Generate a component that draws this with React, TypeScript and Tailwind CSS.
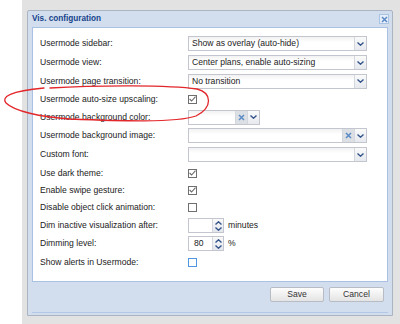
import React from 'react'

// Vis. configuration dialog (ExtJS-like, small Tahoma-ish text)

const font = { fontFamily: '"Liberation Sans", Arial, sans-serif' }

const Chevron: React.FC<{ up?: boolean }> = ({ up }) => (
  <svg width="7" height="4" viewBox="0 0 7 4" className={up ? 'rotate-180' : ''}>
    <path d="M0.5 0.5 L3.5 3.2 L6.5 0.5" fill="none" stroke="#34558b" strokeWidth="1.4" />
  </svg>
)

const Cross: React.FC = () => (
  <svg width="7" height="7" viewBox="0 0 7 7">
    <path d="M1 1 L6 6 M6 1 L1 6" stroke="#5b8bc6" strokeWidth="1.5" />
  </svg>
)

const Trigger: React.FC = () => (
  <div className="flex w-[12px] items-center justify-center border-l border-[#d4d7de] bg-gradient-to-b from-[#fafafa] to-[#e6e9ee]">
    <Chevron />
  </div>
)

const Clear: React.FC = () => (
  <div className="flex w-[12px] items-center justify-center border-l border-[#d4d7de] bg-[#dcdfe4]">
    <Cross />
  </div>
)

const Select: React.FC<{ value?: string; width: string; clear?: boolean }> = ({ value, width, clear }) => (
  <div className={`flex h-[15px] border border-[#c3c6cf] bg-white ${width}`}>
    <div className="flex flex-1 items-center bg-gradient-to-b from-[#f2f2f2] to-white to-40% pl-[3px] text-[8.6px] text-[#222]">
      {value}
    </div>
    {clear && <Clear />}
    <Trigger />
  </div>
)

const Check: React.FC<{ checked?: boolean; focus?: boolean }> = ({ checked, focus }) => (
  <div
    className={`flex h-[9px] w-[9px] items-center justify-center border bg-white ${
      focus ? 'border-[#4f97e0]' : 'border-[#6f6f6f]'
    }`}
  >
    {checked && (
      <svg width="7" height="6" viewBox="0 0 7 6">
        <path d="M0.6 3 L2.6 5 L6.5 0.6" fill="none" stroke="#6a6a6a" strokeWidth="1.1" />
      </svg>
    )}
  </div>
)

const Spinner: React.FC<{ value?: string; unit: string }> = ({ value, unit }) => (
  <div className="flex items-center gap-[4px]">
    <div className="flex h-[15px] w-[36px] border border-[#c3c6cf] bg-white">
      <div className="flex flex-1 items-center pl-[5px] text-[8.6px] text-[#222]">{value}</div>
      <div className="flex w-[11px] flex-col items-center justify-center gap-[2px] border-l border-[#d4d7de] bg-gradient-to-b from-[#fafafa] to-[#e3e7ed]">
        <Chevron up />
        <Chevron />
      </div>
    </div>
    <span className="text-[8.6px] text-[#222]">{unit}</span>
  </div>
)

type Row = { label: string; h: string; control: React.ReactNode }

const rows: Row[] = [
  { label: 'Usermode sidebar:', h: 'h-[19px]', control: <Select value="Show as overlay (auto-hide)" width="w-[179px]" /> },
  { label: 'Usermode view:', h: 'h-[19px]', control: <Select value="Center plans, enable auto-sizing" width="w-[179px]" /> },
  { label: 'Usermode page transition:', h: 'h-[18.5px]', control: <Select value="No transition" width="w-[179px]" /> },
  { label: 'Usermode auto-size upscaling:', h: 'h-[17.5px]', control: <Check checked /> },
  { label: 'Usermode background color:', h: 'h-[18.25px]', control: <Select width="w-[72px]" clear /> },
  { label: 'Usermode background image:', h: 'h-[19.25px]', control: <Select width="w-[179px]" clear /> },
  { label: 'Custom font:', h: 'h-[18.75px]', control: <Select width="w-[179px]" /> },
  { label: 'Use dark theme:', h: 'h-[17.5px]', control: <Check checked /> },
  { label: 'Enable swipe gesture:', h: 'h-[17.25px]', control: <Check checked /> },
  { label: 'Disable object click animation:', h: 'h-[17.75px]', control: <Check /> },
  { label: 'Dim inactive visualization after:', h: 'h-[17.75px]', control: <Spinner unit="minutes" /> },
  { label: 'Dimming level:', h: 'h-[18.5px]', control: <Spinner value="80" unit="%" /> },
  { label: 'Show alerts in Usermode:', h: 'h-[19px]', control: <Check focus /> },
]

const Button: React.FC<{ label: string; width: string }> = ({ label, width }) => (
  <div
    className={`flex h-[15px] items-center justify-center rounded-[2px] border border-[#b8bcc4] bg-gradient-to-b from-[#fdfdfd] to-[#e4e4e4] text-[8.6px] text-[#333] ${width}`}
  >
    {label}
  </div>
)

export default function App() {
  return (
    <div className="relative flex h-[324px] w-[400px] overflow-hidden bg-white" style={font}>
      <div className="ml-[22px] flex-1 bg-[#e2e2e2] pl-[5px] pt-[10px]">
        <div className="flex h-[306px] w-[366px] flex-col rounded-t-[2px] border border-[#aab4c2] bg-[#d2deee]">
          {/* title bar */}
          <div className="flex h-[16px] items-center justify-between pl-[4px] pr-[3px]">
            <span className="text-[8.2px] font-bold text-[#15428b]">Vis. configuration</span>
            <div className="flex h-[10px] w-[10px] items-center justify-center border border-[#a9c3e4] bg-[#e6eef9]">
              <Cross />
            </div>
          </div>
          {/* body */}
          <div className="mx-[4px] flex h-[255px] flex-col border border-[#a9c1e2] bg-white pl-[7px] pt-[6px]">
            {rows.map((r) => (
              <div key={r.label} className={`flex items-center ${r.h}`}>
                <div className="w-[148px] whitespace-nowrap text-[8.6px] text-[#222]">{r.label}</div>
                {r.control}
              </div>
            ))}
          </div>
          {/* footer */}
          <div className="mx-[4px] flex h-[31px] items-start justify-end gap-[5px] border-b border-[#b3c8e6] pr-[4px] pt-[5px]">
            <Button label="Save" width="w-[54px]" />
            <Button label="Cancel" width="w-[55px]" />
          </div>
        </div>
      </div>
      {/* red hand-drawn ellipse */}
      <svg className="pointer-events-none absolute left-0 top-0" width="400" height="324">
        <path
          d="M50 88 C100 85 170 85 197 89 C212 93 213 107 196 116 C176 123 120 121 70 119 C40 117 14 111 6 103 C1 97 10 91 44 88"
          fill="none"
          stroke="#e3262a"
          strokeWidth="1.3"
          strokeLinecap="round"
        />
      </svg>
    </div>
  )
}
